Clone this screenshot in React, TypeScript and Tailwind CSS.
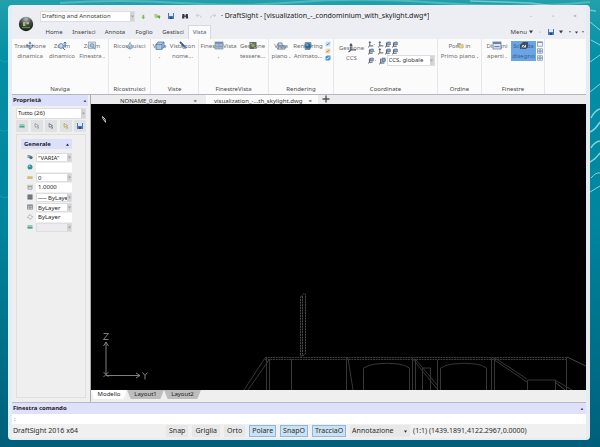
import type { ReactNode } from 'react'

type Size = { className?: string }

const Orb = () => (
  <svg viewBox="0 0 16 16" className="size-4">
    <defs>
      <radialGradient id="orb" cx="50%" cy="15%" r="85%">
        <stop offset="0" stopColor="#b9bdb9" />
        <stop offset="0.45" stopColor="#4a4f49" />
        <stop offset="1" stopColor="#131713" />
      </radialGradient>
    </defs>
    <circle cx="8" cy="8" r="7.2" fill="url(#orb)" />
    <path d="M5 6h2.400v4H5zM8.400 6H11v2.200H8.400z" fill="#9dbb8c" />
    <path d="M4 11.500h8" stroke="#4f8f3a" strokeWidth="1.400" />
  </svg>
)

const Disk = ({ className = 'size-2' }: Size) => (
  <svg viewBox="0 0 8 8" className={className}>
    <rect x="1" y="1" width="6" height="6" fill="#4a76b2" />
    <rect x="2" y="1" width="4" height="3" fill="#dfe9f5" />
    <rect x="3" y="5" width="2" height="2" fill="#29497a" />
  </svg>
)

const NewDoc = () => (
  <svg viewBox="0 0 8 8" className="size-2">
    <path d="M2 1h3l1 1v5H2z" fill="#e6ebe6" />
    <path d="M4.400 3v4M3 5.400h2.600" stroke="#7dba5e" strokeWidth="1.400" />
  </svg>
)

const OpenDoc = () => (
  <svg viewBox="0 0 8 8" className="size-2">
    <path d="M1 2h3l1 1h2v3H2z" fill="#b4cc8a" />
    <path d="M4 4h3.400L6.500 7z" fill="#5fa64f" />
  </svg>
)

const Printer = () => (
  <svg viewBox="0 0 8 8" className="size-2">
    <path d="M1.400 2h2v4.500H1zM4.800 2h2L7.200 6.500H4.800z" fill="#2f3742" />
    <rect x="3" y="3.400" width="2" height="1.600" fill="#4a5360" />
  </svg>
)

const Curve = ({ flip = false }: { flip?: boolean }) => (
  <svg viewBox="0 0 8 8" className="size-2">
    <path
      d={flip ? 'M1.5 6C2 3.5 4 3 6.5 3.4M5 1.8l1.7 1.6L5 5' : 'M6.5 6C6 3.5 4 3 1.5 3.4M3 1.8L1.3 3.4 3 5'}
      fill="none"
      stroke="#c3c8d2"
      strokeWidth="0.9"
    />
  </svg>
)

const Down = ({ className = 'size-1' }: Size) => (
  <svg viewBox="0 0 4 4" className={className}>
    <path d="M0 0.5h4L2 3.5z" fill="currentColor" />
  </svg>
)

const Plus = () => (
  <svg viewBox="0 0 8 8" className="size-2">
    <path d="M4 0.500v7M0.500 4h7" stroke="#555" strokeWidth="1.400" />
  </svg>
)

const MoveIcon = () => (
  <svg viewBox="0 0 10 10" className="size-[10px]">
    <path d="M5 1.500v6M2 4.800h6M5 0.800L3.800 2.400h2.400zM5 8.600L3.800 7h2.400zM1 4.800l2-1.300v2.600zM9 4.800l-2-1.300v2.600z" fill="#4a74a6" stroke="#4a74a6" strokeWidth="0.5" />
  </svg>
)

const ZoomDyn = () => (
  <svg viewBox="0 0 10 10" className="size-[10px]">
    <circle cx="4" cy="5" r="2.4" fill="#c3daf0" stroke="#3b6aa8" strokeWidth="0.8" />
    <path d="M6 7l2 2M8 1v5M6.600 2.500L8 1l1.400 1.500" stroke="#2f5f9f" fill="none" />
  </svg>
)

const ZoomWin = () => (
  <svg viewBox="0 0 10 10" className="size-[10px]">
    <rect x="1.500" y="1" width="7" height="6.500" fill="#cfdbe6" stroke="#8298ac" strokeWidth="0.7" />
    <circle cx="5" cy="4.400" r="1.800" fill="#b0c5da" stroke="#5f86ab" strokeWidth="0.8" />
    <path d="M6.400 6l2 2.400" stroke="#5f86ab" />
  </svg>
)

const Refresh = () => (
  <svg viewBox="0 0 10 10" className="size-[10px]">
    <path d="M5 1.500l2.600 4.500H2.400z" fill="#b6cde2" stroke="#6f93b8" strokeWidth="0.7" />
    <path d="M2.400 6.600c2 1.800 3.400 1.800 5.200 0" fill="none" stroke="#4f7cae" />
  </svg>
)

const Cubes = () => (
  <svg viewBox="0 0 10 10" className="size-[10px]">
    <path d="M3 1h6v5l-2 2.400H1V3.400z" fill="#a7c4e2" stroke="#3f6da4" strokeWidth="0.8" />
    <path d="M1 3.400h6v5M7 3.400L9 1" fill="none" stroke="#3f6da4" strokeWidth="0.8" />
  </svg>
)

const NamedView = () => (
  <svg viewBox="0 0 10 10" className="size-[10px]">
    <path d="M2 1l6 6" stroke="#2c4f86" strokeWidth="1.8" />
    <path d="M4.500 8l4.500-1-1.400-3" fill="#5a80b6" />
  </svg>
)

const Panes = () => (
  <svg viewBox="0 0 10 10" className="size-[10px]">
    <rect x="1" y="1" width="8" height="7" fill="#a0b6d0" stroke="#6a829f" strokeWidth="0.7" />
    <rect x="1" y="1" width="8" height="1.800" fill="#5f83b0" />
    <path d="M5 3v5M1 5.400h8" stroke="#6e88a7" strokeWidth="0.5" />
  </svg>
)

const Tiles = () => (
  <svg viewBox="0 0 10 10" className="size-[10px]">
    <rect x="1.500" y="1" width="7" height="7" fill="#55605a" />
    <circle cx="5" cy="4.500" r="1.800" fill="#8ca43c" />
    <path d="M2.400 2.500h1.600M6 7h2" stroke="#c9ccc9" strokeWidth="0.8" />
  </svg>
)

const PlanView = () => (
  <svg viewBox="0 0 10 10" className="size-[10px]">
    <path d="M2 8V2h4v6M6 5h3v3H1" fill="none" stroke="#48627f" strokeWidth="0.9" />
    <path d="M3 3.500h2v3H3z" fill="#6c9ad0" />
  </svg>
)

const Sphere = () => (
  <svg viewBox="0 0 10 10" className="size-[10px]">
    <path d="M2 1h6l1 4-2 4H2L1 5z" fill="#6a8ba3" />
    <circle cx="5" cy="5" r="2.800" fill="#1f5f9c" />
    <circle cx="4.200" cy="4" r="1" fill="#6cb4de" />
  </svg>
)

const Axes = ({ className = 'size-[10px]' }: Size) => (
  <svg viewBox="0 0 10 10" className={className}>
    <path d="M4 1v6h5M4 7L1.500 9M2.800 2.600L4 1l1.200 1.600" fill="none" stroke="#3a4350" strokeWidth="1.2" />
  </svg>
)

const AxesBox = ({ className = 'size-[7px]' }: Size) => (
  <svg viewBox="0 0 10 10" className={className}>
    <path d="M3.500 2v5.500H8M3.500 7.500L1.500 9" fill="none" stroke="#3a4350" strokeWidth="1.200" />
    <path d="M5 1.500h4v4H5z" fill="#8fa9cc" stroke="#4a5f80" strokeWidth="0.900" />
  </svg>
)

const Front = () => (
  <svg viewBox="0 0 10 10" className="size-[10px]">
    <rect x="2" y="2" width="4" height="4.500" fill="#a5abb5" />
    <rect x="4" y="3.400" width="4" height="3.600" fill="#f0d873" stroke="#b39a4b" strokeWidth="0.4" />
  </svg>
)

const Stack = () => (
  <svg viewBox="0 0 10 10" className="size-[10px]">
    <rect x="1" y="1" width="8" height="7" fill="#dde6f2" stroke="#5a76a3" strokeWidth="0.8" />
    <rect x="1" y="1" width="8" height="2" fill="#5674aa" />
    <path d="M2.400 5.600h5.200" stroke="#5674aa" />
  </svg>
)

const SheetIcon = () => (
  <svg viewBox="0 0 10 10" className="size-[10px]">
    <path d="M1 4l3-3h5v5L7 8H1z" fill="#39465a" />
    <path d="M3.400 4h3.600v2.600H2.600z" fill="#d7e1ef" />
    <path d="M2 8l4.500-4.500" stroke="#8b5b3d" />
  </svg>
)

const Mini = ({ fill, accent }: { fill: string; accent: string }) => (
  <svg viewBox="0 0 6 6" className="size-[6px]">
    <path d="M0.500 1.500L2 0.500h3.500v4L4 5.500H0.500z" fill={fill} />
    <path d="M1.500 4.200L4.500 2" stroke={accent} strokeWidth="1" />
  </svg>
)

const Square = ({ double = false }: { double?: boolean }) => (
  <svg viewBox="0 0 6 6" className="size-[6px]">
    <rect x="0.5" y="0.8" width="5" height="4.4" fill="#f4f7fb" stroke="#6f8bb5" strokeWidth="0.7" />
    <path d={double ? 'M0.5 3h5M3 1v4' : 'M0.5 1.4h5'} stroke="#6f8bb5" />
  </svg>
)

// small glyphs used in the property list and its toolbar
const Tag = ({ children }: { children: ReactNode }) => (
  <svg viewBox="0 0 6 6" className="size-[6px] shrink-0" fill="none">
    {children}
  </svg>
)

const ColorTag = () => (
  <Tag>
    <path d="M0.500 1h3v3h-3z" fill="#8c99a6" />
    <circle cx="4" cy="3.600" r="1.700" fill="#4d6a86" />
  </Tag>
)
const LinkTag = () => (
  <Tag>
    <circle cx="3" cy="3" r="2.500" fill="#2f93a6" />
    <circle cx="2.400" cy="2.200" r="0.900" fill="#7fc9cf" />
  </Tag>
)
const LayerTag = () => (
  <Tag>
    <path d="M0.300 2h5.400v2.200H0.300z" fill="#ddcf86" />
    <path d="M0.300 4.200h5.400" stroke="#9b9250" strokeWidth="0.7" />
  </Tag>
)
const ScaleTag = () => (
  <Tag>
    <path d="M1 0.800v4.400h4V0.800M3 0.800v3M1 2.600h4" stroke="#8b9097" strokeWidth="0.8" />
  </Tag>
)
const WeightTag = () => (
  <Tag>
    <path d="M0.500 0.500h5v5h-5z" fill="#5d6064" />
    <path d="M0.500 2h5M0.500 3.800h5" stroke="#a9acb0" strokeWidth="0.5" />
  </Tag>
)
const LineTag = () => (
  <Tag>
    <path d="M0.500 0.800h5v4.400h-5z" fill="#d9dbdf" stroke="#7c8189" strokeWidth="0.7" />
    <path d="M0.500 1.400h5M0.500 3.200h5M3 1v4" stroke="#7c8189" strokeWidth="0.8" />
  </Tag>
)
const PlotTag = () => (
  <Tag>
    <path d="M3 0.500L5.500 3 3 5.500 0.500 3z" stroke="#8a8d92" strokeWidth="0.9" strokeDasharray="1.600 0.700" />
  </Tag>
)
const MaterialTag = () => (
  <Tag>
    <path d="M0.500 1h5v4h-5z" fill="#93c9b4" />
    <path d="M0.500 3.600h5" stroke="#4f9f95" strokeWidth="1.2" />
  </Tag>
)
const PickTag = ({ accent = '#7d848f' }: { accent?: string }) => (
  <Tag>
    <path d="M1 0.600l0.300 3.600 1-0.800 1.600 2.200 0.900-0.700-1.500-2 1.200-0.300z" fill="#fafafa" stroke={accent} strokeWidth="0.7" />
  </Tag>
)

type Tool = { top: string; bottom: string; icon: ReactNode; width: string; active?: boolean }

function ToolButton({ top, bottom, icon, width, active }: Tool) {
  return (
    <button
      type="button"
      className={`relative h-5 shrink-0 whitespace-nowrap text-center leading-[10px] ${width} ${
        active ? 'bg-[#68a4e6] text-[#3f5f8c]' : 'text-[#6c6c6c]'
      }`}
    >
      <span className="flex flex-col items-center">
        <span>{top}</span>
        <span>{bottom}</span>
      </span>
      <span className="absolute inset-x-0 top-0 flex justify-center opacity-90">{icon}</span>
    </button>
  )
}

function Group({ title, width, children }: { title: string; width: string; children: ReactNode }) {
  return (
    <section className={`flex shrink-0 flex-col justify-between border-r border-[#e6e7eb] pt-[2px] ${width}`}>
      <div className="flex justify-center">{children}</div>
      <h2 className="text-center leading-[10px] text-[#484848]">{title}</h2>
    </section>
  )
}

type ComboProps = { label: string; value: string; className?: string; muted?: boolean }

function Combo({ label, value, className = '', muted }: ComboProps) {
  return (
    <span className={`flex items-stretch border border-[#dcdee2] ${muted ? 'bg-[#ececee]' : 'bg-white'} ${className}`}>
      <select aria-label={label} className="min-w-0 flex-1 appearance-none overflow-hidden bg-transparent pl-px outline-none">
        <option>{value}</option>
      </select>
      <span className="pointer-events-none flex w-1 items-center justify-center bg-[#d4d4d7] text-[#a0a3a8]">
        <Down className="size-[3px]" />
      </span>
    </span>
  )
}

const quickAccess = [
  { name: 'Nuovo', icon: <NewDoc /> },
  { name: 'Apri', icon: <OpenDoc /> },
  { name: 'Salva', icon: <Disk /> },
  { name: 'Stampa', icon: <Printer /> },
  { name: 'Annulla', icon: <Curve /> },
  { name: 'Ripeti', icon: <Curve flip /> },
]

const ribbonTabs = [
  { name: 'Home', width: 'w-7' },
  { name: 'Inserisci', width: 'w-8' },
  { name: 'Annota', width: 'w-[30px]' },
  { name: 'Foglio', width: 'w-7' },
  { name: 'Gestisci', width: 'w-[30px]' },
]

function Header() {
  return (
    <header className="flex shrink-0 bg-[#eceef3] text-[#3c3c3c]">
      <button type="button" aria-label="DraftSight" className="flex w-7 items-center justify-center pt-1">
        <Orb />
      </button>
      <div className="flex min-w-0 flex-1 flex-col">
        <div className="flex h-5 items-center pt-[2px]">
          <Combo label="Area di lavoro" value="Drafting and Annotation" className="h-[11px] w-[95px]" />
          <div className="flex gap-[6px] pl-1">
            {quickAccess.map((q) => (
              <button key={q.name} type="button" aria-label={q.name}>
                {q.icon}
              </button>
            ))}
          </div>
          <h1 className="truncate pl-1 text-[7px] text-[#222]">
            · DraftSight - [visualization_-_condominium_with_skylight.dwg*]
          </h1>
          <div className="ml-auto flex gap-4 pr-2 text-[#999]">
            <button type="button" aria-label="Riduci" className="w-[6px]">-</button>
            <button type="button" aria-label="Ingrandisci" className="w-[6px]">▫</button>
            <button type="button" aria-label="Chiudi" className="w-[6px]">×</button>
          </div>
        </div>
        <nav className="flex h-[14px] items-end">
          {ribbonTabs.map((t) => (
            <button key={t.name} type="button" className={`h-[14px] ${t.width}`}>
              {t.name}
            </button>
          ))}
          <button type="button" className="h-[14px] w-[23px] border border-b-0 border-[#d5d8de] bg-[#fbfbfc] text-[#4f6184]">
            Vista
          </button>
          <div className="ml-auto flex h-[14px] items-center gap-[6px] pr-[2px]">
            <button type="button" className="flex items-center gap-[2px]">
              Menu <Down />
            </button>
            <span className="text-[#b5b5b5]">▫</span>
            <button type="button" aria-label="Salva" className="flex items-center gap-1">
              <Disk /> <Down />
            </button>
            <span className="flex items-center gap-1">
              <Down className="size-[2px]" />
              <Down className="size-[3px]" />
              <Down className="size-[2px]" />
            </span>
          </div>
        </nav>
      </div>
    </header>
  )
}

function Ribbon() {
  return (
    <div className="flex h-14 shrink-0 overflow-hidden border-b border-[#b4b6bd] bg-[#fbfbfc]">
      <Group title="Naviga" width="w-[97px]">
        <ToolButton top="Traslazione" bottom="dinamica" icon={<MoveIcon />} width="w-[34px]" />
        <ToolButton top="Zoom" bottom="dinamico" icon={<ZoomDyn />} width="w-[30px]" />
        <ToolButton top="Zoom" bottom="Finestra ," icon={<ZoomWin />} width="w-[30px]" />
      </Group>
      <Group title="Ricostruisci" width="w-[42px]">
        <ToolButton top="Ricostruisci" bottom="," icon={<Refresh />} width="w-9" />
      </Group>
      <Group title="Viste" width="w-12">
        <ToolButton top="Viste" bottom="," icon={<Cubes />} width="w-4" />
        <ToolButton top="Vista con" bottom="nome..." icon={<NamedView />} width="w-[30px]" />
      </Group>
      <Group title="FinestreVista" width="w-[70px]">
        <ToolButton top="FinestreVista" bottom="," icon={<Panes />} width="w-[38px]" />
        <ToolButton top="Gestione" bottom="tessere..." icon={<Tiles />} width="w-[30px]" />
      </Group>
      <Group title="Rendering" width="w-[65px]">
        <ToolButton top="Vista" bottom="piano ," icon={<PlanView />} width="w-5" />
        <ToolButton top="Rendering" bottom="Animato..." icon={<Sphere />} width="w-[34px]" />
        <div className="flex flex-col gap-px">
          <Mini fill="#c9def3" accent="#3f83c9" />
          <Mini fill="#e8dcb4" accent="#a88f4e" />
          <Mini fill="#4c93c9" accent="#e4f0fa" />
        </div>
      </Group>
      <Group title="Coordinate" width="w-[104px]">
        <div className="flex pt-[2px]">
          <ToolButton top="Gestione" bottom="CCS" icon={<Axes />} width="w-[30px]" />
        </div>
        <div className="flex flex-col">
          {['world', 'view'].map((row) => (
            <div key={row} className="flex h-[7px]">
              {row === 'world' ? <Axes className="size-[7px]" /> : <AxesBox />}
              <span className="w-[3px] leading-[7px]">·</span>
              <Axes className="size-[7px]" />
              <AxesBox />
              <AxesBox />
            </div>
          ))}
          <div className="flex items-center gap-px">
            <AxesBox />
            <span className="w-[2px]">·</span>
            <AxesBox className="size-2" />
            <Combo label="CCS" value="CCS, globale" className="h-[11px] w-12 text-[#333]" />
          </div>
        </div>
      </Group>
      <Group title="Ordine" width="w-11">
        <ToolButton top="Porta in" bottom="Primo piano ," icon={<Front />} width="w-[42px]" />
      </Group>
      <Group title="Finestre" width="w-[63px]">
        <ToolButton top="Disegni" bottom="aperti   ," icon={<Stack />} width="w-7" />
        <ToolButton top="Scheda" bottom="disegno" icon={<SheetIcon />} width="w-[25px]" active />
        <div className="flex flex-col gap-px pl-px">
          <Square />
          <Square double />
          <Square double />
        </div>
      </Group>
    </div>
  )
}

const filterButtons = [
  { name: 'Aggiorna', icon: <MaterialTag /> },
  { name: 'Seleziona', icon: <PickTag /> },
  { name: 'Deseleziona', icon: <PickTag accent="#4f5662" /> },
  { name: 'Filtro', icon: <PickTag accent="#b08b2e" /> },
  { name: 'Salva', icon: <Disk /> },
]

const properties = [
  { name: 'Colore', value: '"VARIA"', list: true, icon: <ColorTag /> },
  { name: 'Collegamento', value: '', list: false, icon: <LinkTag /> },
  { name: 'Layer', value: '0', list: true, icon: <LayerTag /> },
  { name: 'Scala tipo di linea', value: '1.0000', list: false, icon: <ScaleTag /> },
  { name: 'Spessore di linea', value: '── ByLayer', list: true, icon: <WeightTag /> },
  { name: 'Tipo di linea', value: 'ByLayer', list: true, icon: <LineTag /> },
  { name: 'Stile di stampa', value: 'ByLayer', list: false, icon: <PlotTag /> },
  { name: 'Materiale', value: '', list: true, icon: <MaterialTag />, muted: true },
]

function PropertiesPanel() {
  return (
    <aside className="flex w-[79px] shrink-0 flex-col border-r border-[#a9a9ad] bg-[#efefef] pb-1 text-[#222]">
      <div className="mr-[2px] flex h-[11px] items-center justify-between bg-[#dcdffa] pl-px pr-[2px] font-bold">
        <h2>Proprietà</h2>
        <button type="button" aria-label="Chiudi" className="leading-[6px]">▪</button>
      </div>
      <Combo label="Selezione" value="Tutto (26)" className="mx-1 mt-[2px] h-[11px]" />
      <div className="mx-1 mt-px flex justify-between">
        {filterButtons.map((b) => (
          <button key={b.name} type="button" aria-label={b.name} className="flex h-3 w-3 items-center justify-center bg-[#e0e1e3]">
            {b.icon}
          </button>
        ))}
      </div>
      <div className="mx-1 mt-[2px] flex-1 border border-[#e0e0e2] px-1 pt-1">
        <div className="flex h-[10px] w-[51px] items-center justify-between bg-[#dcdffa] px-[3px] font-bold">
          <h3>Generale</h3>
          <Down className="size-[3px] rotate-180" />
        </div>
        <div className="flex w-[51px] flex-col pt-[3px]">
          {properties.map((p) => (
            <div key={p.name} className="flex h-[10px] items-center justify-between pl-[6px]">
              {p.icon}
              {p.list ? (
                <Combo label={p.name} value={p.value} muted={p.muted} className="h-[9px] w-9" />
              ) : (
                <input aria-label={p.name} defaultValue={p.value} className="h-[9px] w-9 bg-white pl-[2px] outline-none" />
              )}
            </div>
          ))}
        </div>
      </div>
    </aside>
  )
}

function Drawing() {
  return (
    <svg viewBox="0 0 495 286" preserveAspectRatio="xMidYMax meet" className="min-h-0 w-full flex-1 bg-black" fill="none">
      <path d="M11.500 12.500l2.500 2.500 0.500 3.500M11.500 12.500l0.500 2.500 2.500 3" stroke="#d8d8d8" strokeWidth="0.900" />
      <g stroke="#8c8c8c" strokeWidth="0.9">
        <path d="M12.500 229.500h5l-5 6h5" />
        <path d="M15 270V238M12.500 242l2.500-4 2.500 4M12.500 268l5 5M17.500 268l-5 5" />
        <path d="M15 271.500h34M45 269l4 2.500-4 2.500" />
        <path d="M51.500 268.500l2.500 3 2.500-3M54 271.500v4" />
      </g>
      <g stroke="#4c4c4c" strokeWidth="1" strokeDasharray="2 0.7">
        <path d="M209.500 193l3-3h2v60l-3 2h-2zM211.500 192v60" />
        <path d="M174 253.500h302M174 255.500h302" strokeWidth="0.800" />
      </g>
      <g stroke="#363636" strokeWidth="1">
        <path d="M174 254l-21 32M178 256l-21 30M175.500 254v32M178.500 255v31M200.500 255v31" />
        <path d="M255.500 254v32M257 254l5 32" />
        <path d="M272.500 286v-22q5-3 12-4 12-1.500 23 0 7 1 11 4v22" />
        <path d="M321.500 255v31M324.500 255v31M321 254l26 32M325 256l22 26M331.500 286v-22h8v22" />
        <path d="M346.500 256v30M349.500 286v-22q5-3 12-4 12-1.500 23 0 7 1 11 4v22M400.500 254v32M403.500 254v32" />
        <path d="M402 255l34 23M436.500 286v-10h28v10M464 276l17 10M475.500 253v33M404 254l32 21" />
      </g>
      <path d="M476 253l19 9M464 278l10 8" stroke="#454545" />
    </svg>
  )
}

function DocumentArea() {
  return (
    <main className="flex min-w-0 flex-1 flex-col bg-[#efefef]">
      <div className="flex h-[9px] shrink-0 overflow-hidden bg-[#ececee] pl-4 text-[#333]">
        <button type="button" className="flex w-[99px] shrink-0 justify-between pl-[13px] pr-[9px] leading-3">
          <span>NONAME_0.dwg</span>
          <span>×</span>
        </button>
        <button type="button" className="flex w-28 shrink-0 justify-between whitespace-nowrap bg-[#fbfbfc] pl-2 pr-[6px] leading-3">
          <span>visualization_-...th_skylight.dwg</span>
          <span>×</span>
        </button>
        <button type="button" aria-label="Nuova scheda" className="flex w-4 items-start justify-center">
          <Plus />
        </button>
      </div>
      <Drawing />
      <div className="flex h-3 shrink-0 items-start text-[#222]">
        <button type="button" className="h-[9px] w-9 bg-white leading-[9px] [clip-path:polygon(0_0,100%_0,90%_100%,8%_100%)]">
          Modello
        </button>
        {['Layout1', 'Layout2'].map((name) => (
          <button
            key={name}
            type="button"
            className="h-[9px] w-[37px] bg-[#bdbdbd] leading-[9px] [clip-path:polygon(0_0,100%_0,90%_100%,10%_100%)]"
          >
            {name}
          </button>
        ))}
      </div>
    </main>
  )
}

const toggles = [
  { name: 'Snap', on: false },
  { name: 'Griglia', on: false },
  { name: 'Orto', on: false },
  { name: 'Polare', on: true },
  { name: 'SnapO', on: true },
  { name: 'TracciaO', on: true },
]

function StatusBar() {
  return (
    <footer className="flex h-[14px] shrink-0 items-center bg-[#f0f0f0] text-[7px] text-[#2b2b2b]">
      <span className="w-[154px] shrink-0 pl-px">DraftSight 2016 x64</span>
      <div className="flex shrink-0 gap-1">
        {toggles.map((t) => (
          <button
            key={t.name}
            type="button"
            aria-pressed={t.on}
            className={`h-3 border px-[2px] leading-[10px] ${
              t.on ? 'border-[#8fb9dc] bg-[#cbe2f5]' : 'border-[#e6e6e6] bg-[#e8e8e8]'
            }`}
          >
            {t.name}
          </button>
        ))}
      </div>
      <span className="ml-1 flex h-3 w-[60px] items-center bg-[#e8e8e8] pr-[3px]">
        <select aria-label="Annotazione" className="min-w-0 flex-1 appearance-none bg-transparent pl-[2px] outline-none">
          <option>Annotazione</option>
        </select>
        <Down className="size-[3px]" />
      </span>
      <span className="whitespace-nowrap pl-[3px]">(1:1) (1439.1891,4122.2967,0.0000)</span>
    </footer>
  )
}

// desktop wallpaper: light ripples on water
function Ripples() {
  return (
    <svg viewBox="0 0 600 447" preserveAspectRatio="none" className="absolute inset-0 size-full" fill="none">
      <path d="M60 3q60-4 120 0t120-1 140 1 150-1" stroke="#7fcfcf" strokeWidth="2" opacity="0.5" />
      <path d="M470 1l60 2 66 8" stroke="#a5e2e4" strokeWidth="1.500" opacity="0.6" />
      <g stroke="#c4eef2" opacity="0.7">
        <path d="M590 22l10 8M591 40l9 5M590 62l10-7M590 92l10-8" />
        <path d="M591 118q4-8 9-9M590 132q5-2 10-10M591 148q3-6 9-7M590 162q6-3 10-9" strokeWidth="1.500" />
        <path d="M591 178q5-6 9-5M590 192l10-6" />
      </g>
      <path d="M0 60q4 3 8 1M0 130q4 3 8 0M0 196q4 3 8 1" stroke="#3fb0bd" opacity="0.4" />
    </svg>
  )
}

function App() {
  return (
    <div className="relative flex h-screen bg-[linear-gradient(180deg,#22a0ac_0%,#0590a6_12%,#00859d_50%,#005f7a_100%)] pb-[7px] pl-2 pr-[10px] pt-[5px] font-['Noto_Sans',sans-serif] text-[6px]">
      <Ripples />
      <div className="relative flex min-w-0 flex-1 flex-col rounded-sm border-x-4 border-b-2 border-[#e4ecf5] bg-[#efefef]">
        <Header />
        <Ribbon />
        <div className="flex min-h-0 flex-1">
          <PropertiesPanel />
          <DocumentArea />
        </div>
        <section className="shrink-0 border-t border-[#b9bac4]">
          <div className="flex h-[11px] items-center justify-between bg-[#dfe0fb] pl-px pr-[3px] font-bold text-[#222]">
            <h2>Finestra comando</h2>
            <button type="button" aria-label="Chiudi" className="leading-[6px]">▪</button>
          </div>
          <label className="flex h-[10px] items-center bg-white pl-[2px] text-[#555]">
            :
            <input aria-label="Comando" className="min-w-0 flex-1 outline-none" />
          </label>
        </section>
        <StatusBar />
      </div>
    </div>
  )
}

export default App
